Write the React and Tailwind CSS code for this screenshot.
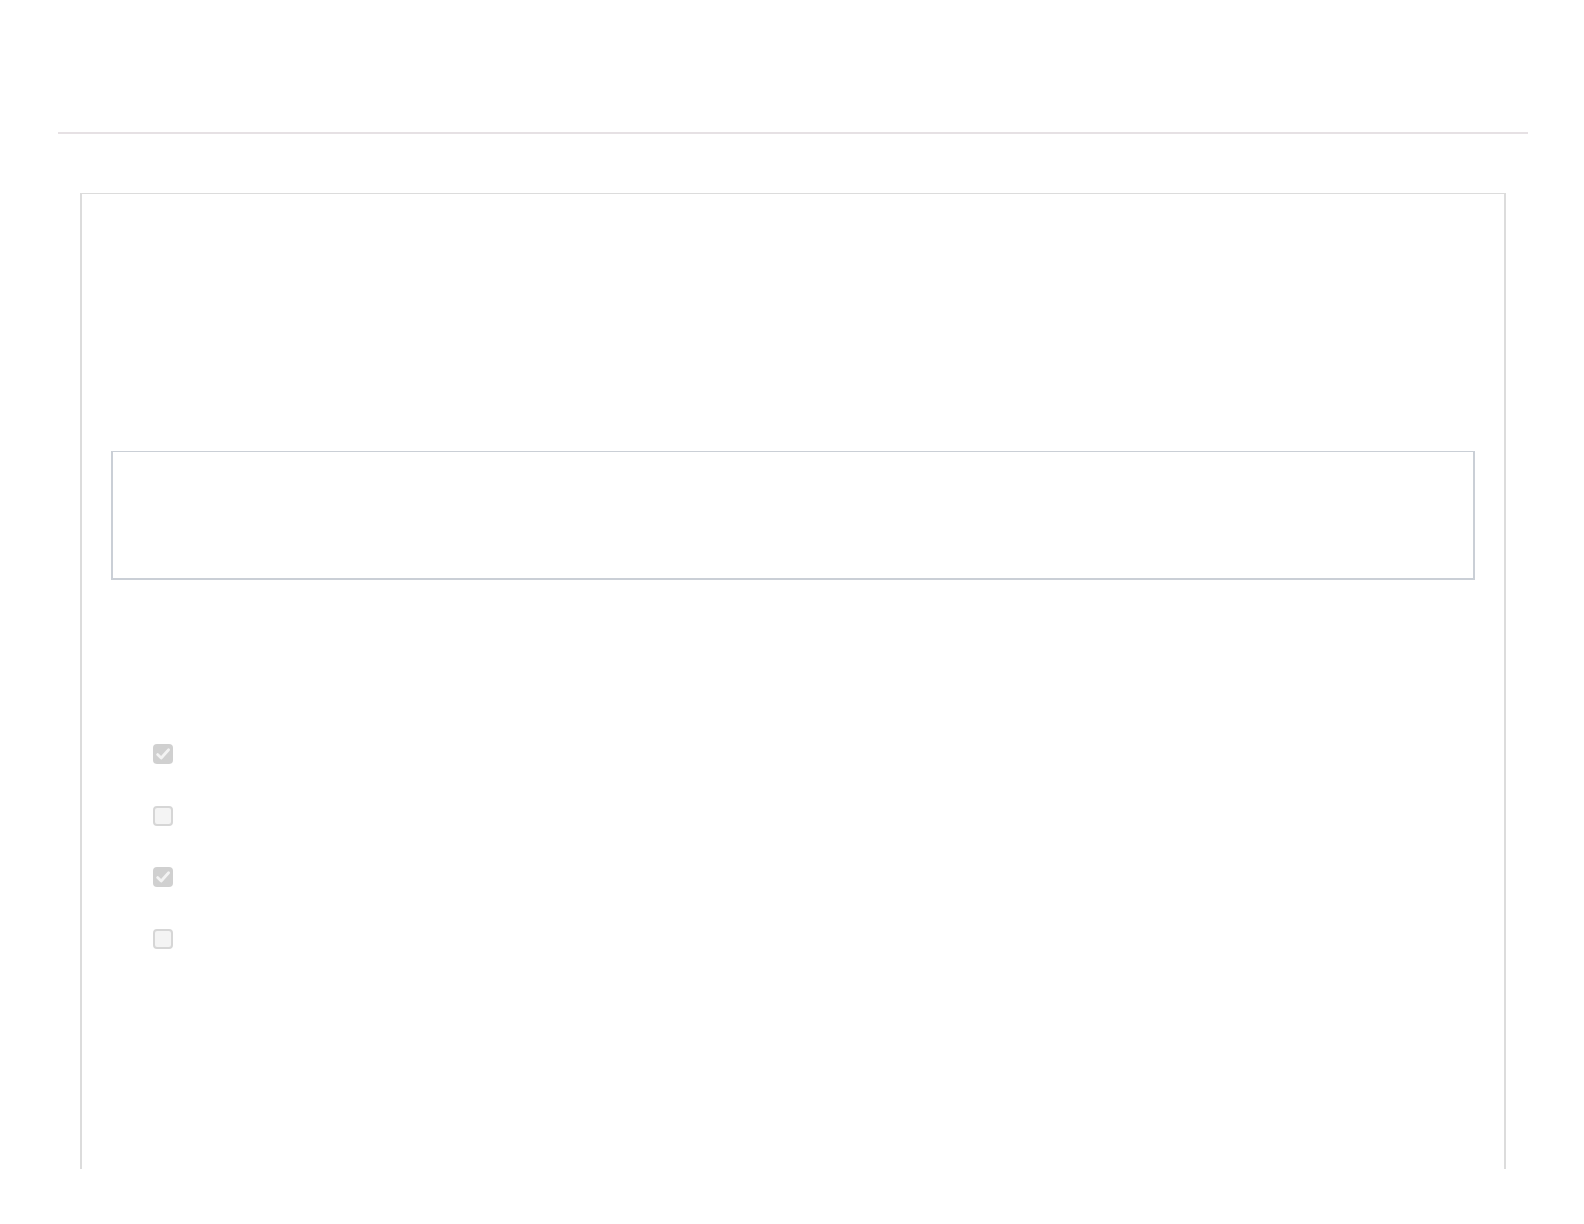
export default function App() {
  const items = [true, false, true, false];
  return (
    <div className="w-[1584px] h-[1224px] bg-white" style={{ fontFamily: '"Liberation Sans", Arial, sans-serif' }}>
      <div className="pt-[132px] pl-[58px] pr-[56px]">
        <div className="h-[2px] bg-[#e6e1e4]" />
        <div className="mx-[22px] mt-[59px] h-[976px] border-t border-x-2 border-[#dcdcdc] bg-white px-[29px] pt-[257px]">
          <div className="h-[129px] border-t border-x-2 border-b-2 border-[#cacfd6] bg-white" />
          <div className="mt-[164px] pl-[42px] flex flex-col gap-[41.5px]">
            {items.map((checked, i) =>
              checked ? (
                <div key={i} className="w-[20px] h-[20px] rounded-[4px] bg-[#d0d0d0] flex items-center justify-center">
                  <svg width="16" height="16" viewBox="0 0 16 16">
                    <path d="M2.6 8.6 L6.2 12 L13.6 3.8" fill="none" stroke="#f3f3f3" strokeWidth="2.8" strokeLinecap="round" strokeLinejoin="round" />
                  </svg>
                </div>
              ) : (
                <div key={i} className="w-[20px] h-[20px] rounded-[4px] bg-[#f4f4f4] border-2 border-[#d6d6d6]" />
              )
            )}
          </div>
        </div>
      </div>
    </div>
  );
}
